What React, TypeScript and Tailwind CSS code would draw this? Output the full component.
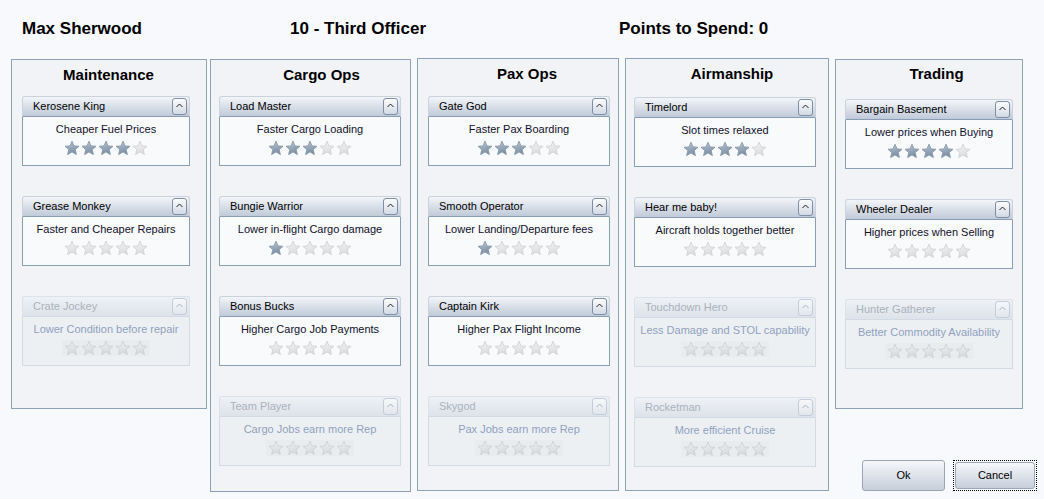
type Perk = {
  name: string;
  desc: string;
  stars: number;
  disabled?: boolean;
};

type Column = {
  title: string;
  perks: Perk[];
  colCls: string;
  titleCls: string;
  cardW: string;
};

const columns: Column[] = [
  {
    title: 'Maintenance',
    colCls: 'mt-[1px] w-[196px] h-[350px] pl-[10px]',
    titleCls: 'h-[36px] pt-[6px] pr-[11px]',
    cardW: 'w-[168px]',
    perks: [
      { name: 'Kerosene King', desc: 'Cheaper Fuel Prices', stars: 4 },
      { name: 'Grease Monkey', desc: 'Faster and Cheaper Repairs', stars: 0 },
      { name: 'Crate Jockey', desc: 'Lower Condition before repair', stars: 0, disabled: true },
    ],
  },
  {
    title: 'Cargo Ops',
    colCls: 'mt-[1px] ml-[3px] w-[201px] h-[433px] pl-[8px]',
    titleCls: 'h-[36px] pt-[6px] pl-[14px]',
    cardW: 'w-[182px]',
    perks: [
      { name: 'Load Master', desc: 'Faster Cargo Loading', stars: 3 },
      { name: 'Bungie Warrior', desc: 'Lower in-flight Cargo damage', stars: 1 },
      { name: 'Bonus Bucks', desc: 'Higher Cargo Job Payments', stars: 0 },
      { name: 'Team Player', desc: 'Cargo Jobs earn more Rep', stars: 0, disabled: true },
    ],
  },
  {
    title: 'Pax Ops',
    colCls: 'ml-[6px] w-[202px] h-[433px] pl-[10px]',
    titleCls: 'h-[37px] pt-[6px] pl-[8px]',
    cardW: 'w-[182px]',
    perks: [
      { name: 'Gate God', desc: 'Faster Pax Boarding', stars: 3 },
      { name: 'Smooth Operator', desc: 'Lower Landing/Departure fees', stars: 1 },
      { name: 'Captain Kirk', desc: 'Higher Pax Flight Income', stars: 0 },
      { name: 'Skygod', desc: 'Pax Jobs earn more Rep', stars: 0, disabled: true },
    ],
  },
  {
    title: 'Airmanship',
    colCls: 'ml-[6px] w-[204px] h-[433px] pl-[8px]',
    titleCls: 'h-[38px] pt-[6px] pl-[2px]',
    cardW: 'w-[182px]',
    perks: [
      { name: 'Timelord', desc: 'Slot times relaxed', stars: 4 },
      { name: 'Hear me baby!', desc: 'Aircraft holds together better', stars: 0 },
      { name: 'Touchdown Hero', desc: 'Less Damage and STOL capability', stars: 0, disabled: true },
      { name: 'Rocketman', desc: 'More efficient Cruise', stars: 0, disabled: true },
    ],
  },
];

const trading: Column = {
  title: 'Trading',
  colCls: 'mt-[1px] w-[188px] h-[350px] pl-[9px]',
  titleCls: 'h-[39px] pt-[5px] pl-[6px]',
  cardW: 'w-[168px]',
  perks: [
    { name: 'Bargain Basement', desc: 'Lower prices when Buying', stars: 4 },
    { name: 'Wheeler Dealer', desc: 'Higher prices when Selling', stars: 0 },
    { name: 'Hunter Gatherer', desc: 'Better Commodity Availability', stars: 0, disabled: true },
  ],
};

const STAR =
  'M8 1.2 L10 5.9 L15 6.3 L11.2 9.6 L12.4 14.6 L8 11.9 L3.6 14.6 L4.8 9.6 L1 6.3 L6 5.9 Z';

function Star({ on, faded }: { on: boolean; faded?: boolean }) {
  const fill = on ? 'url(#starOn)' : faded ? 'url(#starFaded)' : 'url(#starOff)';
  const stroke = on ? '#8799ab' : faded ? '#cdd1d6' : '#d0d3d7';
  return (
    <svg width="16" height="16" viewBox="0 0 16 16">
      <path d={STAR} fill={fill} stroke={stroke} strokeWidth="0.9" strokeLinejoin="round" />
    </svg>
  );
}

function Chevron({ faded }: { faded?: boolean }) {
  return (
    <div
      className={
        faded
          ? 'flex h-[17px] w-[15px] items-start justify-center rounded-[3px] border border-[#c3ccd8] bg-linear-to-b from-[#f6f8fa] to-[#e2e7ed]'
          : 'flex h-[17px] w-[15px] items-start justify-center rounded-[3px] border border-[#7d8ea5] bg-linear-to-b from-[#fbfcfd] to-[#d3dae4]'
      }
    >
      <svg width="9" height="8" viewBox="0 0 9 8" className="mt-[3px]">
        <path
          d="M1.5 5 L4.5 2 L7.5 5"
          fill="none"
          stroke={faded ? '#a9b2bd' : '#202020'}
          strokeWidth="1"
        />
      </svg>
    </div>
  );
}

function PerkCard({ perk, width }: { perk: Perk; width: string }) {
  const off = perk.disabled;
  return (
    <div className={`${width} shrink-0`}>
      <div
        className={
          off
            ? 'flex h-[21px] items-center rounded-t-[3px] border border-[#dce2e9] border-b-[#d3dae3] bg-linear-to-b from-[#eef1f5] to-[#dde3ea] pl-[10px] pr-[2px]'
            : 'flex h-[21px] items-center rounded-t-[3px] border border-[#c9d2dd] border-b-[#8a9db6] bg-linear-to-b from-[#f3f5f9] to-[#c0cad8] pl-[10px] pr-[2px]'
        }
      >
        <span className={off ? 'text-[11px] text-[#aab2bc]' : 'text-[11px] text-black'}>
          {perk.name}
        </span>
        <div className="ml-auto">
          <Chevron faded={off} />
        </div>
      </div>
      <div
        className={
          off
            ? 'flex h-[49px] flex-col items-center border border-t-0 border-[#d3dae3] bg-[#edf0f3] pt-[3px]'
            : 'flex h-[49px] flex-col items-center border border-t-0 border-[#8a9db6] bg-[#f9fafc] pt-[3px]'
        }
      >
        <div className={off ? 'text-[11px] leading-[18px] text-[#8fa1c0]' : 'text-[11px] leading-[18px] text-[#10102a]'}>
          {perk.desc}
        </div>
        <div className={off ? 'mt-[2px] flex gap-[1px] bg-[#e9ecef] px-[2px]' : 'mt-[2px] flex gap-[1px] px-[2px]'}>
          {[0, 1, 2, 3, 4].map((i) => (
            <Star key={i} on={i < perk.stars} faded={off} />
          ))}
        </div>
      </div>
    </div>
  );
}

function Panel({ col }: { col: Column }) {
  return (
    <div className={`${col.colCls} shrink-0 border border-[#8ea1ba] bg-[#f1f3f6]`}>
      <div className={`${col.titleCls} text-center text-[15px] font-bold leading-[18px] text-black`}>
        {col.title}
      </div>
      <div className="flex flex-col gap-[30px]">
        {col.perks.map((p) => (
          <PerkCard key={p.name} perk={p} width={col.cardW} />
        ))}
      </div>
    </div>
  );
}

function Button({ label, focused }: { label: string; focused?: boolean }) {
  const inner = (
    <div className="flex h-full w-full items-center justify-center rounded-[3px] border border-[#9aa6b6] bg-linear-to-b from-[#f5f7fa] to-[#c7cfdb] text-[11px] text-black">
      {label}
    </div>
  );
  if (focused) {
    return <div className="h-[31px] w-[84px] border border-dotted border-black p-[1px]">{inner}</div>;
  }
  return <div className="h-[31px] w-[83px]">{inner}</div>;
}

export default function App() {
  return (
    <div
      className="h-[499px] w-[1044px] overflow-hidden bg-[#f7f9fc]"
      style={{ fontFamily: '"Liberation Sans", Arial, sans-serif' }}
    >
      <svg width="0" height="0" className="absolute">
        <defs>
          <linearGradient id="starOn" x1="0" y1="0" x2="0.3" y2="1">
            <stop offset="0" stopColor="#c9d3dc" />
            <stop offset="0.5" stopColor="#9aabbb" />
            <stop offset="1" stopColor="#7a8ea2" />
          </linearGradient>
          <linearGradient id="starOff" x1="0" y1="0" x2="0.3" y2="1">
            <stop offset="0" stopColor="#f6f6f6" />
            <stop offset="1" stopColor="#dcdcdc" />
          </linearGradient>
          <linearGradient id="starFaded" x1="0" y1="0" x2="0.3" y2="1">
            <stop offset="0" stopColor="#f3f3f4" />
            <stop offset="1" stopColor="#d6d8db" />
          </linearGradient>
        </defs>
      </svg>

      <div className="flex h-[58px] items-center pl-[22px] text-[17px] font-bold text-black">
        <span className="w-[268px]">Max Sherwood</span>
        <span className="w-[329px]">10 - Third Officer</span>
        <span>Points to Spend: 0</span>
      </div>

      <div className="flex items-start pl-[11px]">
        {columns.map((c) => (
          <Panel key={c.title} col={c} />
        ))}
        <div className="ml-[6px] flex h-[433px] w-[203px] flex-col">
          <Panel col={trading} />
          <div className="mt-auto flex justify-end gap-[8px] pr-[1px]">
            <Button label="Ok" />
            <Button label="Cancel" focused />
          </div>
        </div>
      </div>
    </div>
  );
}
